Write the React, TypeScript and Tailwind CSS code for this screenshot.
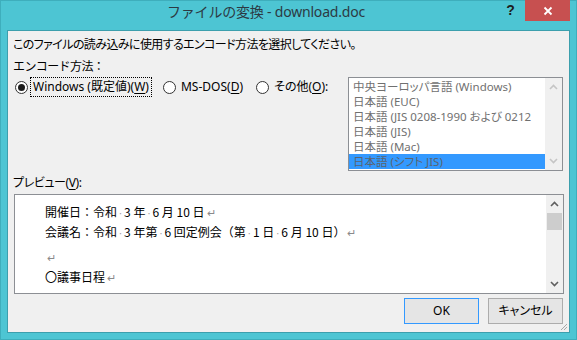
import React from 'react'

const ui = "font-['Noto_Sans','Noto_Sans_CJK_JP',sans-serif] [font-feature-settings:'palt']"

function Radio({ checked }: { checked?: boolean }) {
  return (
    <span className="w-[13px] h-[13px] rounded-full border border-[#333333] bg-white flex items-center justify-center shrink-0">
      {checked && <span className="w-[7px] h-[7px] rounded-full bg-[#1c1c1c]" />}
    </span>
  )
}

function Chevron({ up, color }: { up?: boolean; color: string }) {
  return (
    <svg width="9" height="6" viewBox="0 0 9 6">
      <polyline
        points={up ? '1,5 4.5,1.5 8,5' : '1,1 4.5,4.5 8,1'}
        fill="none"
        stroke={color}
        strokeWidth="1.6"
      />
    </svg>
  )
}

const encodings = [
  '中央ヨーロッパ言語 (Windows)',
  '日本語 (EUC)',
  '日本語 (JIS 0208-1990 および 0212',
  '日本語 (JIS)',
  '日本語 (Mac)',
  '日本語 (シフト JIS)',
]

function Dot() {
  return <span className="text-[#9a9a9a] text-[9px] mx-[1px]">·</span>
}

function Ret() {
  return <span className="text-[#8a8a8a] text-[11px] ml-[2px]">↵</span>
}

export default function App() {
  return (
    <div className={`w-[577px] h-[340px] bg-[#4dc5d3] shadow-[inset_0_0_0_1px_#3eaebc] flex flex-col ${ui}`}>
      {/* title bar */}
      <div className="h-[30px] flex items-start shrink-0">
        <div className="flex-1 h-[23px] flex items-center justify-center pl-[36px] text-[14px] text-[#2c3a44] [font-feature-settings:normal] tracking-[-0.2px]">
          ファイルの変換 - download.doc
        </div>
        <div className="w-[29px] h-[21px] flex items-center justify-center text-[14px] font-bold text-[#1e1e1e] font-['Liberation_Sans',sans-serif]">
          ?
        </div>
        <div className="w-[45px] h-[21px] mr-[7px] bg-[#c75050] flex items-center justify-center">
          <svg width="10" height="10" viewBox="0 0 10 10">
            <path d="M1.5 1.5 L8.5 8.5 M8.5 1.5 L1.5 8.5" stroke="#ffffff" strokeWidth="1.8" />
          </svg>
        </div>
      </div>

      {/* client area */}
      <div className="flex-1 mx-[7px] mb-[7px] border border-[#3c9fad] bg-[#f0f0f0] relative flex flex-col pl-[5px] pr-[5px] text-[12px] text-black">
        <div className="h-[16px] leading-[16px] mt-[6px] tracking-[-0.6px]">
          このファイルの読み込みに使用するエンコード方法を選択してください。
        </div>
        <div className="h-[16px] leading-[16px] mt-[6px] tracking-[-0.6px] [font-feature-settings:normal]">
          エンコード方法：
        </div>

        <div className="flex mt-[2px] h-[94px]">
          <div className="flex-1 flex items-start">
            <div className="flex items-center h-[20px] ml-[2px]">
              <Radio checked />
              <span className="ml-[2px] h-[20px] px-[2px] border border-dotted border-black flex items-center">
                Windows (既定値)(<u className="underline-offset-2">W</u>)
              </span>
            </div>
            <div className="flex items-center h-[20px] ml-[11px]">
              <Radio />
              <span className="ml-[5px]">
                MS-DOS(<u className="underline-offset-2">D</u>)
              </span>
            </div>
            <div className="flex items-center h-[20px] ml-[13px]">
              <Radio />
              <span className="ml-[5px]">
                その他(<u className="underline-offset-2">O</u>):
              </span>
            </div>
          </div>
          <div className="w-[215px] mr-[1px] border border-[#8c8f94] bg-white flex">
            <div className="flex-1 overflow-hidden pt-[1px] text-[#707070] text-[11.5px]">
              {encodings.map((e, i) => (
                <div
                  key={e}
                  className={`h-[15px] leading-[15px] pl-[4px] whitespace-nowrap overflow-hidden ${
                    i === 5 ? 'bg-[#3399ff] text-[#5a6470]' : ''
                  }`}
                >
                  {e}
                </div>
              ))}
            </div>
            <div className="w-[17px] bg-[#f0f0f0] flex flex-col items-center justify-between py-[6px]">
              <Chevron up color="#c5c5c5" />
              <Chevron color="#c5c5c5" />
            </div>
          </div>
        </div>

        <div className="h-[16px] leading-[16px] mt-[4px] tracking-[-0.4px]">
          プレビュー(<u className="underline-offset-2">V</u>):
        </div>

        <div className="mt-[3px] ml-[1px] h-[100px] border border-[#8c8f94] bg-white flex">
          <div className="flex-1 overflow-hidden pl-[30px] pt-[7px] text-[12px] [font-feature-settings:normal] font-['Noto_Sans_CJK_JP',sans-serif]">
            <div className="h-[20px] leading-[20px] whitespace-nowrap">
              開催日：令和<Dot />3 年<Dot />6 月 10 日<Ret />
            </div>
            <div className="h-[20px] leading-[20px] whitespace-nowrap">
              会議名：令和<Dot />3 年第<Dot />6 回定例会（第<Dot />1 日<Dot />6 月 10 日）<Ret />
            </div>
            <div className="h-[20px] leading-[20px] mt-[5px]">
              <Ret />
            </div>
            <div className="h-[20px] leading-[20px] whitespace-nowrap">
              〇議事日程<Ret />
            </div>
          </div>
          <div className="w-[17px] bg-[#f0f0f0] flex flex-col items-center">
            <div className="h-[18px] flex items-center justify-center">
              <Chevron up color="#5f5f5f" />
            </div>
            <div className="w-[15px] h-[17px] bg-[#cdcdcd]" />
            <div className="flex-1" />
            <div className="h-[18px] flex items-center justify-center">
              <Chevron color="#5f5f5f" />
            </div>
          </div>
        </div>

        <div className="flex justify-end gap-[9px] mt-[4px] mr-[1px]">
          <button className="w-[75px] h-[26px] border border-[#3399ff] bg-[#e5e5e5] text-[12px] text-black">
            OK
          </button>
          <button className="w-[75px] h-[26px] border border-[#acacac] bg-[#e5e5e5] text-[12px] text-black">
            キャンセル
          </button>
        </div>

        {/* resize grip */}
        <svg className="absolute right-[1px] bottom-[1px]" width="8" height="8" viewBox="0 0 8 8">
          <path d="M7 1 L1 7 M7 4 L4 7 M7 7 L7 7" stroke="#a8a8a8" strokeWidth="1" />
        </svg>
      </div>
    </div>
  )
}
